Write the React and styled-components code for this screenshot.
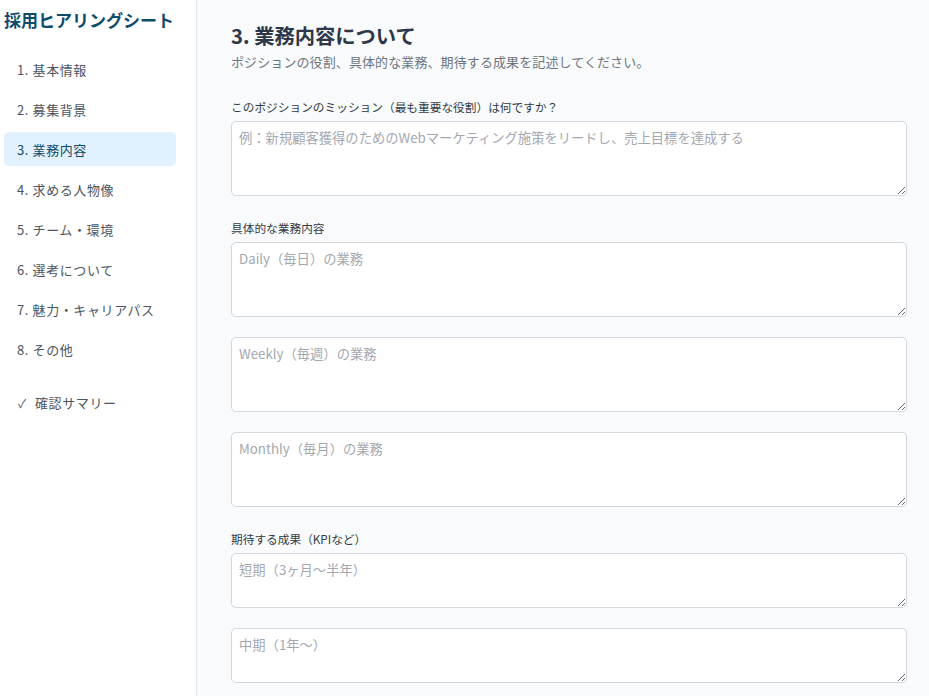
import React from "react";
import styled, { createGlobalStyle } from "styled-components";

const GlobalStyle = createGlobalStyle`
  * { box-sizing: border-box; }
  body {
    margin: 0;
    font-family: "Noto Sans CJK JP", "Noto Sans", sans-serif;
    background: #f8fafc;
  }
`;

const navItems = [
  "1. 基本情報",
  "2. 募集背景",
  "3. 業務内容",
  "4. 求める人物像",
  "5. チーム・環境",
  "6. 選考について",
  "7. 魅力・キャリアパス",
  "8. その他",
];

function App() {
  return (
    <Layout>
      <GlobalStyle />
      <Sidebar>
        <Brand>採用ヒアリングシート</Brand>
        <Nav>
          {navItems.map((item, i) => (
            <NavItem key={item} $active={i === 2}>
              {item}
            </NavItem>
          ))}
        </Nav>
        <Summary>
          <Check>✓</Check>確認サマリー
        </Summary>
      </Sidebar>
      <Main>
        <Title>3. 業務内容について</Title>
        <Lead>ポジションの役割、具体的な業務、期待する成果を記述してください。</Lead>

        <Field>
          <Label>このポジションのミッション（最も重要な役割）は何ですか？</Label>
          <TextArea placeholder="例：新規顧客獲得のためのWebマーケティング施策をリードし、売上目標を達成する" />
        </Field>

        <Field>
          <Label>具体的な業務内容</Label>
          <Stack>
            <TextArea placeholder="Daily（毎日）の業務" />
            <TextArea placeholder="Weekly（毎週）の業務" />
            <TextArea placeholder="Monthly（毎月）の業務" />
          </Stack>
        </Field>

        <Field>
          <Label>期待する成果（KPIなど）</Label>
          <Stack>
            <TextArea $short placeholder="短期（3ヶ月〜半年）" />
            <TextArea $short placeholder="中期（1年〜）" />
          </Stack>
        </Field>
      </Main>
    </Layout>
  );
}

export default App;

const Layout = styled.div`
  display: flex;
  height: 696px;
  overflow: hidden;
`;

const Sidebar = styled.aside`
  width: 197px;
  flex-shrink: 0;
  background: #fff;
  border-right: 1px solid #e5e9ef;
  padding: 7px 20px 0 4px;
`;

const Brand = styled.h1`
  margin: 0 0 19px;
  font-size: 17px;
  line-height: 26px;
  font-weight: 700;
  color: #0f4c6b;
  white-space: nowrap;
`;

const Nav = styled.nav`
  display: flex;
  flex-direction: column;
  gap: 6px;
`;

const NavItem = styled.div`
  height: 34px;
  display: flex;
  align-items: center;
  padding-left: 13px;
  border-radius: 5px;
  font-size: 13px;
  letter-spacing: 0.6px;
  color: ${(p) => (p.$active ? "#0f4c6b" : "#4d5561")};
  background: ${(p) => (p.$active ? "#e1f1fd" : "transparent")};
`;

const Summary = styled.div`
  margin-top: 19px;
  height: 34px;
  display: flex;
  align-items: center;
  padding-left: 14px;
  font-size: 13px;
  letter-spacing: 0.6px;
  color: #4d5561;
`;

const Check = styled.span`
  display: inline-block;
  width: 17px;
  font-size: 12px;
  color: #5a616c;
`;

const Main = styled.main`
  flex: 1;
  padding: 22px 22px 0 34px;
`;

const Title = styled.h2`
  margin: 0;
  font-size: 20.3px;
  line-height: 27px;
  font-weight: 700;
  color: #2d3748;
`;

const Lead = styled.p`
  margin: 3px 0 26px;
  font-size: 13px;
  line-height: 20px;
  letter-spacing: 0.1px;
  color: #6e7581;
`;

const Field = styled.section`
  margin-bottom: 23px;
`;

const Label = styled.label`
  display: block;
  margin-bottom: 5px;
  font-size: 11.7px;
  line-height: 18px;
  color: #333a44;
`;

const Stack = styled.div`
  display: flex;
  flex-direction: column;
  gap: 20px;
`;

const TextArea = styled.textarea`
  display: block;
  width: 100%;
  height: ${(p) => (p.$short ? "55px" : "75px")};
  padding: 7px 7px;
  border: 1px solid #d3d7de;
  border-radius: 5px;
  background: #fff;
  font-family: inherit;
  font-size: 13.3px;
  line-height: 18px;
  color: #333;
  resize: vertical;

  &::placeholder {
    color: #a3a8b0;
  }
`;
